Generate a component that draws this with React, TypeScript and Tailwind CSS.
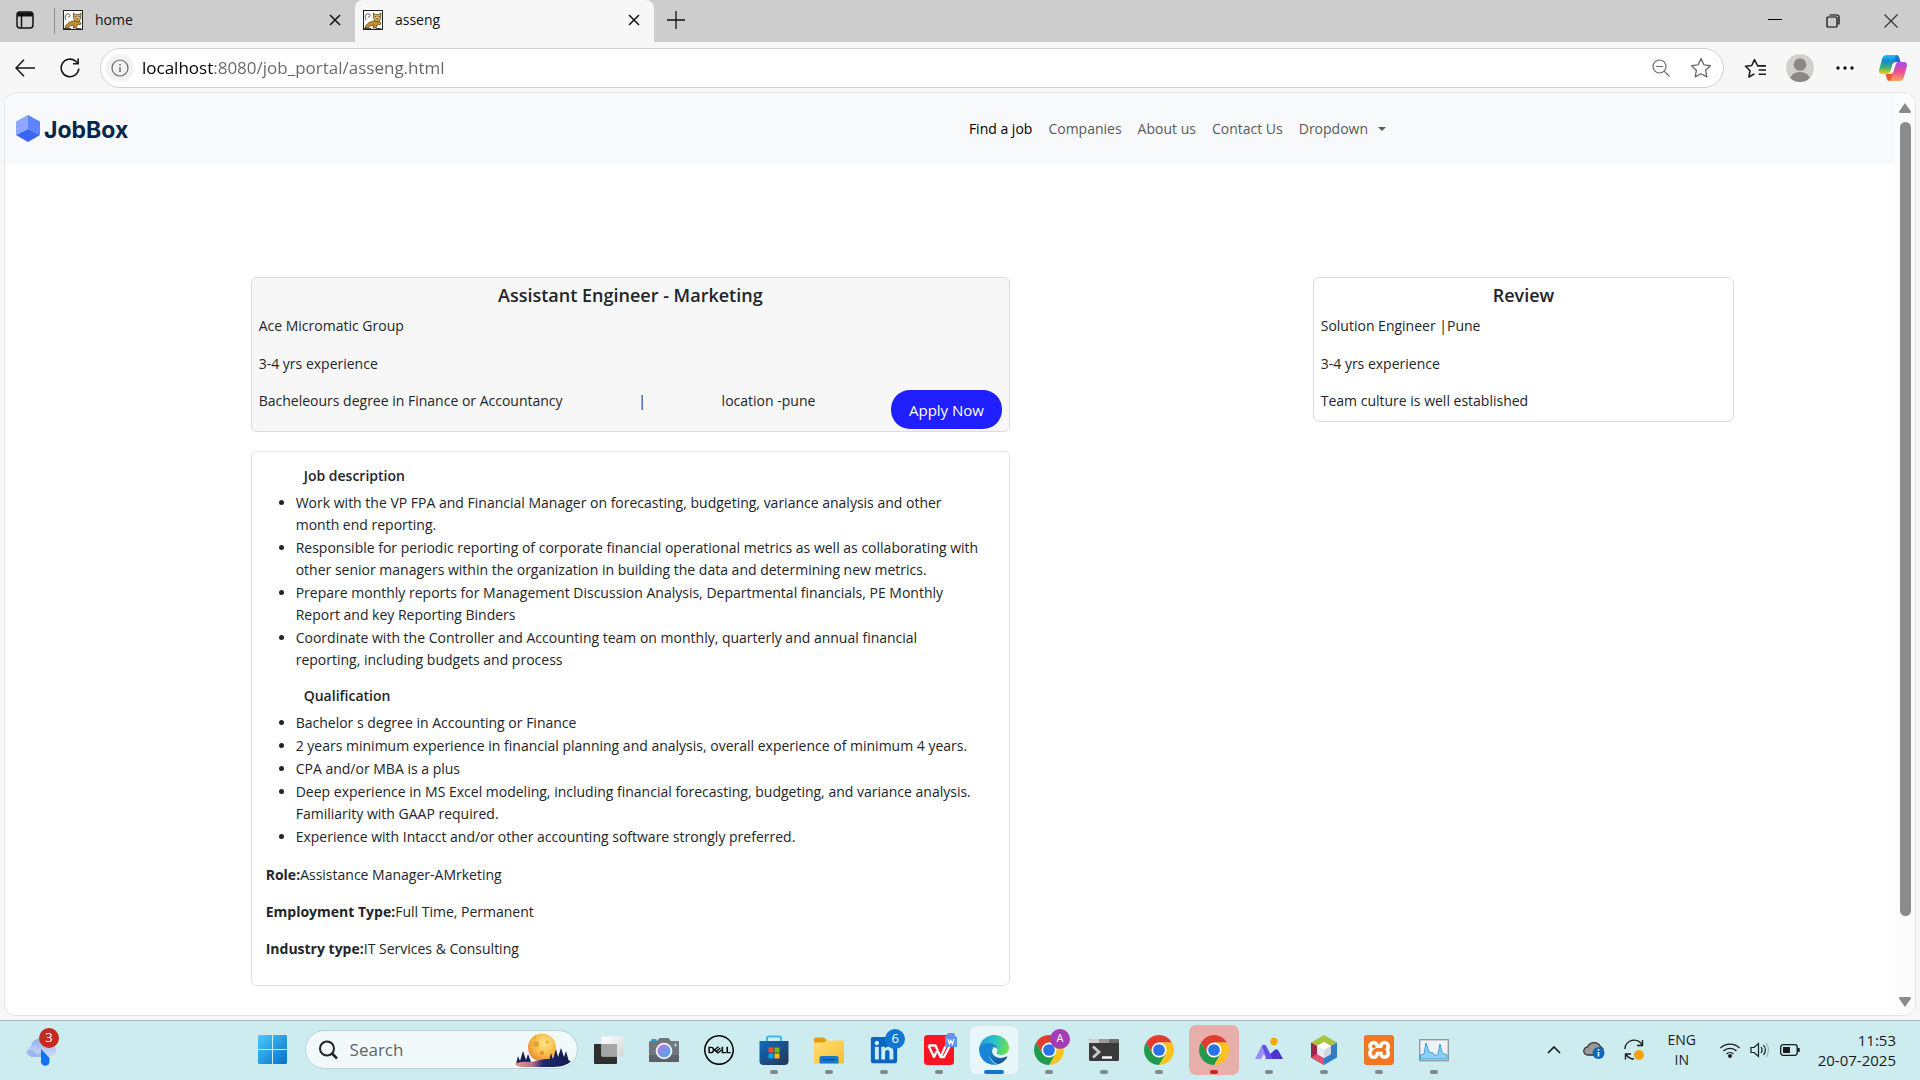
import React from "react";
import { SiDell, SiXampp } from "react-icons/si";
import { FaLinkedin } from "react-icons/fa";

const DUTIES = [
  "Work with the VP FPA and Financial Manager on forecasting, budgeting, variance analysis and other month end reporting.",
  "Responsible for periodic reporting of corporate financial operational metrics as well as collaborating with other senior managers within the organization in building the data and determining new metrics.",
  "Prepare monthly reports for Management Discussion Analysis, Departmental financials, PE Monthly Report and key Reporting Binders",
  "Coordinate with the Controller and Accounting team on monthly, quarterly and annual financial reporting, including budgets and process",
];

const QUALIFICATIONS = [
  "Bachelor s degree in Accounting or Finance",
  "2 years minimum experience in financial planning and analysis, overall experience of minimum 4 years.",
  "CPA and/or MBA is a plus",
  "Deep experience in MS Excel modeling, including financial forecasting, budgeting, and variance analysis. Familiarity with GAAP required.",
  "Experience with Intacct and/or other accounting software strongly preferred.",
];

const DETAILS = [
  ["Role:", "Assistance Manager-AMrketing"],
  ["Employment Type:", "Full Time, Permanent"],
  ["Industry type:", "IT Services & Consulting"],
];

/* ---------- browser chrome ---------- */

function CloseIcon() {
  return (
    <svg viewBox="0 0 12 12" className="size-3" stroke="#111" strokeWidth="1.5" fill="none">
      <path d="M1 1l10 10M11 1L1 11" />
    </svg>
  );
}

function TomcatIcon() {
  return (
    <svg viewBox="0 0 20 20" className="size-5 shrink-0">
      <rect x=".5" y=".5" width="19" height="19" fill="#fff" stroke="#222" />
      <path d="M3 10C1 6 3 3 6 4c2 1 1 3-1 3" fill="none" stroke="#555" strokeWidth="1" />
      <path d="M2 18c1-4 4-6 8-7l5-1 3 3-1 2-2-1-2 4h-3l1-3-4 1-2 2z" fill="#c98d2b" stroke="#3a2a0c" strokeWidth=".6" />
      <path d="M10.5 3l2 1.600h3.200L18 3l-.3 5.500-2 3h-3l-2-3z" fill="#e2b455" stroke="#3a2a0c" strokeWidth=".7" />
      <path d="M12.200 6.500h1M15.500 6.500h1M13.500 9h1.600" stroke="#222" strokeWidth=".9" />
      <path d="M1 18.500h7M13 18.500h5" stroke="#444" strokeWidth="1" />
    </svg>
  );
}

function TabStrip() {
  return (
    <div className="flex h-[42px] bg-[#cdcdcd] pb-0.5">
      <button aria-label="Tab actions" className="flex w-[50px] items-center justify-center">
        <svg viewBox="0 0 18 18" className="size-[18px]" fill="none" stroke="#111" strokeWidth="1.5">
          <rect x="1" y="1" width="16" height="16" rx="3" />
          <path d="M1.500 3.500h15" strokeWidth="4" />
          <path d="M5.500 5v12" />
        </svg>
      </button>
      <div className="mt-2 mb-1.5 ml-1 w-px bg-[#8a8a8a]" />
      <div className="flex w-[300px] items-center pr-3.5 pl-2">
        <div className="flex grow items-center gap-3">
          <TomcatIcon />
          <span className="text-[14px] leading-5 text-[#111]">home</span>
        </div>
        <button aria-label="Close home">
          <CloseIcon />
        </button>
      </div>
      <div className="-mb-0.5 flex w-[299px] items-center rounded-t-lg bg-[#f7f7f7] pr-3.5 pb-0.5 pl-2">
        <div className="flex grow items-center gap-3">
          <TomcatIcon />
          <span className="text-[14px] leading-5 text-[#111]">asseng</span>
        </div>
        <button aria-label="Close asseng">
          <CloseIcon />
        </button>
      </div>
      <button aria-label="New tab" className="flex w-11 items-center justify-center">
        <svg viewBox="0 0 18 18" className="size-[18px]" stroke="#111" strokeWidth="1.300">
          <path d="M9 0v18M0 9h18" />
        </svg>
      </button>
      <div className="ml-auto flex">
        <button aria-label="Minimize" className="flex w-[58px] items-center justify-center">
          <svg viewBox="0 0 14 14" className="size-3.5" stroke="#000"><path d="M0 6.500h14" /></svg>
        </button>
        <button aria-label="Restore" className="flex w-[58px] items-center justify-center pt-0.5">
          <svg viewBox="0 0 14 14" className="size-3.5" stroke="#000" strokeWidth="1.200" fill="none">
            <rect x="1" y="3" width="10" height="10" rx="1" />
            <path d="M3.500 1h7.500a2 2 0 0 1 2 2v7.500" />
          </svg>
        </button>
        <button aria-label="Close window" className="flex w-[58px] items-center justify-center pt-0.5">
          <svg viewBox="0 0 14 14" className="size-3.5" stroke="#333" strokeWidth="1.200"><path d="M.5.5l13 13M13.500.5l-13 13" /></svg>
        </button>
      </div>
    </div>
  );
}

function Copilot() {
  return (
    <svg viewBox="0 0 28 26" className="h-[26px] w-7">
      <defs>
        <linearGradient id="cpA" x1="0" y1="0" x2="0" y2="1">
          <stop offset="0" stopColor="#1ec8f5" /><stop offset=".3" stopColor="#1487d8" /><stop offset=".65" stopColor="#3fae6e" /><stop offset="1" stopColor="#f6d312" />
        </linearGradient>
        <linearGradient id="cpB" x1="0" y1="0" x2="0" y2="1">
          <stop offset="0" stopColor="#a44df0" /><stop offset=".5" stopColor="#ea4d93" /><stop offset="1" stopColor="#ffa45c" />
        </linearGradient>
        <linearGradient id="cpC" x1="0" y1="0" x2="1" y2="1">
          <stop offset="0" stopColor="#1a9bea" /><stop offset="1" stopColor="#2147cf" />
        </linearGradient>
      </defs>
      <path d="M14 0h3.500c1.500 0 2.200 1 2.700 2.500L21.500 7H17c-2 0-2.800 1-3.300 2.700z" fill="url(#cpC)" />
      <path d="M14 26h-3.500c-1.500 0-2.200-1-2.700-2.500L6.500 19H11c2 0 2.800-1 3.300-2.700z" fill="#f2582e" />
      <path d="M7.500 0H18c-1.500.3-2 1.500-2.500 3l-4 13c-.6 2-1.500 3-3.500 3H3c-2.500 0-3.500-2-2.700-4.700l3-11C4.200 1 5.500 0 7.500 0z" fill="url(#cpA)" />
      <path d="M20.500 26H10c1.500-.3 2-1.500 2.500-3l4-13c.6-2 1.500-3 3.500-3h5c2.500 0 3.500 2 2.700 4.700l-3 11C23.800 25 22.500 26 20.500 26z" fill="url(#cpB)" />
      <path d="M13.700 9.500c.5-1.500 1.500-2 3.300-2-1 .8-1.300 1.700-1.600 2.700l-2 6.500c-.5 1.400-1.300 1.800-3 1.800.8-.8 1-1.500 1.300-2.500z" fill="#fff" />
    </svg>
  );
}

const STAR = "M10 1.500l2.600 5.600 6 .8-4.400 4.200 1.100 6L10 15.200l-5.300 2.900 1.100-6L1.400 7.900l6-.8z";

function Toolbar() {
  return (
    <div className="flex h-[50px] items-center bg-[#f7f7f7] pt-0.5">
      <button aria-label="Back" className="flex w-[50px] justify-center">
        <svg viewBox="0 0 20 18" className="h-[18px] w-5" fill="none" stroke="#1a1a1a" strokeWidth="1.600">
          <path d="M9 .8L1 9l8 8.200M1 9h19" />
        </svg>
      </button>
      <button aria-label="Refresh" className="flex w-10 justify-center">
        <svg viewBox="0 0 20 20" className="size-5" fill="none" stroke="#1a1a1a" strokeWidth="1.600">
          <path d="M18.800 10.500a8.800 8.800 0 1 1-3-7.200L18 5.500" />
          <path d="M18.200.5v5.300h-5.300" />
        </svg>
      </button>
      <div className="ml-2.5 flex h-10 grow items-center rounded-full border border-[#cfcfcf] bg-white pr-3 pl-[5px]">
        <button aria-label="View site information" className="flex size-7 items-center justify-center rounded-full bg-[#f2f2f2]">
          <svg viewBox="0 0 18 18" className="size-[18px]" fill="none" stroke="#666" strokeWidth="1.200">
            <circle cx="9" cy="9" r="8" />
            <path d="M9 8v5M9 5v1.500" strokeWidth="1.400" />
          </svg>
        </button>
        <input
          aria-label="Address"
          defaultValue="localhost:8080/job_portal/asseng.html"
          className="ml-2 grow bg-[linear-gradient(90deg,#000_72px,#666_72px)] bg-clip-text text-[17px] leading-6 text-transparent outline-none"
        />
        <button aria-label="Zoom" className="flex w-10 justify-center">
          <svg viewBox="0 0 18 18" className="size-[18px]" fill="none" stroke="#6a6a6a" strokeWidth="1.200">
            <circle cx="7.500" cy="7.500" r="6.500" /><path d="M4 7.500h7M12.200 12.200L17.500 17.500" />
          </svg>
        </button>
        <button aria-label="Add to favorites" className="ml-2.5 flex w-5 justify-center">
          <svg viewBox="0 0 20 20" className="size-[22px] shrink-0" fill="none" stroke="#6a6a6a" strokeWidth="1.200" strokeLinejoin="round"><path d={STAR} /></svg>
        </button>
      </div>
      <button aria-label="Favorites" className="ml-2 flex w-[46px] justify-center">
        <svg viewBox="0 0 22 20" className="h-[21px] w-[23px]" fill="none" stroke="#1a1a1a" strokeWidth="1.500" strokeLinejoin="round">
          <path d="M12.700 6.800L10 1.500 7.400 7.100l-6 .8 4.400 4.200-1.100 6 5.300-2.900M12.500 7.500H21M14 11.500h7M14 15.500h7" />
        </svg>
      </button>
      <button aria-label="Profile" className="ml-2 size-7 overflow-hidden rounded-full bg-[#d2d0ce]">
        <svg viewBox="0 0 28 28" className="size-7" fill="#8a8886"><circle cx="14" cy="10.500" r="6.300" /><ellipse cx="14" cy="26" rx="10" ry="8" /></svg>
      </button>
      <button aria-label="Settings and more" className="flex w-[62px] justify-center">
        <svg viewBox="0 0 18 4" className="h-1 w-[18px]" fill="#111"><circle cx="2" cy="2" r="1.700" /><circle cx="9" cy="2" r="1.700" /><circle cx="16" cy="2" r="1.700" /></svg>
      </button>
      <button aria-label="Copilot" className="mr-[13px] ml-[3px] flex">
        <Copilot />
      </button>
    </div>
  );
}

/* ---------- page ---------- */

function Navbar() {
  return (
    <nav className="flex h-[71px] items-center bg-[#f8f9fa]">
      <a href="#" className="flex w-[51%] items-center gap-1 pl-[11px]">
        <svg viewBox="0 0 24 27" className="h-[27px] w-6">
          <path d="M12 0L0 6.500v13.500L12 14z" fill="#8fa8ff" />
          <path d="M12 0l12 6.500v13.500L12 14z" fill="#5f84ff" />
          <path d="M0 20l12-6 12 6-12 7z" fill="#3c65f5" />
        </svg>
        <span className="pt-0.5 font-[Inter] text-[23px] leading-7 font-bold text-[#05264e]">JobBox</span>
      </a>
      <div className="flex gap-4 text-[14px] leading-[22px] text-[#5a5b5c]">
        <a href="#" className="text-black">Find a job</a>
        <a href="#">Companies</a>
        <a href="#">About us</a>
        <a href="#">Contact Us</a>
        <button className="flex items-center gap-2.5">
          Dropdown
          <svg viewBox="0 0 8 4" className="h-1 w-2" fill="currentColor"><path d="M0 0h8L4 4z" /></svg>
        </button>
      </div>
    </nav>
  );
}

function BulletList({ items }: { items: string[] }) {
  return (
    <ul className="mb-4 list-disc space-y-px pr-3 pl-[30px]">
      {items.map((t) => (
        <li key={t}>{t}</li>
      ))}
    </ul>
  );
}

function JobPage() {
  return (
    <div className="grid grid-cols-[760fr_303fr_422fr] items-start pt-[113px] pr-[8.5%] pl-[13%] text-[14px] leading-[22px] text-[#212529]">
      <div className="flex flex-col gap-[19px]">
        <section className="rounded-md border border-[#dedbdd] bg-[#f7f7f7] px-[7px] pt-1.5 pb-0.5">
          <h1 className="mb-[9px] text-center text-[18px] leading-[22px] font-semibold">Assistant Engineer - Marketing</h1>
          <p className="mb-4">Ace Micromatic Group</p>
          <p className="mb-[15px]">3-4 yrs experience</p>
          <div className="flex items-start justify-between">
            <p>Bacheleours degree in Finance or Accountancy</p>
            <span>|</span>
            <p>location -pune</p>
            <button className="h-[39px] rounded-[19px] bg-[#1f1fff] px-[18px] text-[15px] text-white">Apply Now</button>
          </div>
        </section>
        <section className="rounded-md border border-[#e2e2e4] bg-white px-[14px] pt-[15px] pb-[25px]">
          <h2 className="mb-[7px] pl-[38px] text-[14px] leading-[18px] font-semibold">Job description</h2>
          <BulletList items={DUTIES} />
          <h2 className="mb-[7px] pl-[38px] text-[14px] leading-[18px] font-semibold">Qualification</h2>
          <BulletList items={QUALIFICATIONS} />
          <div className="flex flex-col gap-[15px]">
            {DETAILS.map(([k, v]) => (
              <p key={k}><b>{k}</b>{v}</p>
            ))}
          </div>
        </section>
      </div>
      <section className="col-start-3 rounded-md border border-[#dedbdd] bg-white px-[7px] pt-1.5 pb-[9px]">
        <h2 className="mb-[9px] text-center text-[18px] leading-[22px] font-semibold">Review</h2>
        <p className="mb-4">Solution Engineer |Pune</p>
        <p className="mb-[15px]">3-4 yrs experience</p>
        <p>Team culture is well established</p>
      </section>
    </div>
  );
}

function Scrollbar() {
  return (
    <div className="flex w-5 shrink-0 flex-col items-center bg-[#fcfcfc] pt-2.5 pb-2">
      <svg viewBox="0 0 12 10" className="h-2.5 w-3" fill="#8b8b8b"><path d="M6 0l6 8.500-.5 1.500H.5L0 8.500z" /></svg>
      <div className="mt-[9px] w-[11px] grow rounded-full bg-[#8b8b8b]" />
      <div className="h-[9%]" />
      <svg viewBox="0 0 12 10" className="h-2.5 w-3" fill="#8b8b8b"><path d="M6 10L0 1.500.5 0h11l.5 1.500z" /></svg>
    </div>
  );
}

/* ---------- taskbar icons ---------- */

function Chrome() {
  return (
    <svg viewBox="2 2 44 44" className="size-[30px]">
      <path d="M24 13H43.050A22 22 0 0 0 4.950 13L14.470 29.500 24 24z" fill="#e33b2e" />
      <path d="M43.050 13H24v11l9.530 5.500L24 46A22 22 0 0 0 43.050 13z" fill="#fcc31e" />
      <path d="M24 46l9.530-16.500L24 24l-9.530 5.500L4.950 13A22 22 0 0 0 24 46z" fill="#219a4c" />
      <circle cx="24" cy="24" r="11" fill="#fff" />
      <circle cx="24" cy="24" r="8.600" fill="#2a73e8" />
    </svg>
  );
}

function Edge() {
  return (
    <svg viewBox="0 0 30 30" className="size-[30px]">
      <defs>
        <linearGradient id="edA" x1="0" y1=".3" x2="1" y2=".5">
          <stop offset="0" stopColor="#1f9de0" /><stop offset=".5" stopColor="#2fc3c6" /><stop offset="1" stopColor="#6be14c" />
        </linearGradient>
        <linearGradient id="edB" x1="0" y1="0" x2="1" y2="1">
          <stop offset="0" stopColor="#1b8fdc" /><stop offset="1" stopColor="#114a8b" />
        </linearGradient>
      </defs>
      <path d="M.2 13C1.500 5.500 7.500 0 15 0c8.500 0 15 6 15 12.500 0 4.500-3.500 7.500-7.500 7.500-3 0-5-1-5-2.300 0-1 1-1.200 1-3C18.500 11.500 15 9 10.500 9 5.500 9 2 11.500.2 13z" fill="url(#edA)" />
      <path d="M.2 13C2 9.500 6 8 10 8c5 0 8.500 3 8.500 6.500-1-2-3-2.500-4.500-2-3 1-4.500 4.500-3.500 8.500 1 4.500 4.500 8 8.500 8.300A15 15 0 0 1 .2 13z" fill="#1785d8" />
      <path d="M10.500 14.500C8.500 19 11 26 19 29.300c4-1 7.500-3.800 9.300-7.200.3-.6-.2-.9-.7-.6-5 2.500-11 1.500-13.500-2-1.300-2-1.500-4.500.5-7-1.800 0-3.300.7-4.100 2z" fill="url(#edB)" />
    </svg>
  );
}

function TaskView() {
  return (
    <svg viewBox="0 0 30 30" className="size-[30px]">
      <defs><linearGradient id="tvA" x1="0" y1="0" x2="1" y2="1"><stop offset="0" stopColor="#fff" /><stop offset="1" stopColor="#d5d5d5" /></linearGradient></defs>
      <rect x="0" y="9" width="23" height="20" rx="1" fill="#2f2f2d" />
      <rect x="7.500" y="1.500" width="22" height="20" rx="1" fill="url(#tvA)" />
      <path d="M7.500 9H23v12.500H8.500a1 1 0 0 1-1-1z" fill="#a3a6a5" />
    </svg>
  );
}

function Camera() {
  return (
    <svg viewBox="0 0 30 30" className="size-[30px]">
      <defs><linearGradient id="cmA" x1="0" y1="0" x2="1" y2="1"><stop offset="0" stopColor="#c36ee0" /><stop offset="1" stopColor="#36b4f2" /></linearGradient></defs>
      <rect x="2" y="4" width="6" height="4" rx="1.500" fill="#1aa4e4" />
      <path d="M1.500 6H8l2.500-3h9L22 6h6.500c1 0 1.500.5 1.500 1.500v18c0 1-.5 1.500-1.500 1.500h-27C.5 27 0 26.500 0 25.500v-18C0 6.500.5 6 1.500 6z" fill="#70767d" />
      <path d="M0 20h30v5.500c0 1-.5 1.500-1.500 1.500h-27C.5 27 0 26.500 0 25.500z" fill="#5c6269" />
      <circle cx="15" cy="16" r="8.300" fill="#f4f4f4" /><circle cx="15" cy="16" r="6.500" fill="url(#cmA)" />
      <path d="M26.500 8.500v3M25 10h3" stroke="#ddd" strokeWidth=".9" />
    </svg>
  );
}

function Store() {
  return (
    <svg viewBox="0 0 30 30" className="size-[30px]">
      <defs><linearGradient id="stA" x1="0" y1="0" x2="1" y2="1"><stop offset="0" stopColor="#0f6cc0" /><stop offset="1" stopColor="#263356" /></linearGradient></defs>
      <path d="M8 8V3a1.500 1.500 0 0 1 1.500-1.500h11A1.500 1.500 0 0 1 22 3v5" fill="none" stroke="#34bdf0" strokeWidth="2" />
      <path d="M.5 6h29v20a4 4 0 0 1-4 4h-21a4 4 0 0 1-4-4z" fill="url(#stA)" />
      <path d="M9.500 12.500h5v5h-5z" fill="#f25022" /><path d="M15.500 12.500h5v5h-5z" fill="#7fba00" />
      <path d="M9.500 18.500h5v5h-5z" fill="#00a4ef" /><path d="M15.500 18.500h5v5h-5z" fill="#ffb900" />
    </svg>
  );
}

function Folder() {
  return (
    <svg viewBox="0 0 30 30" className="size-[30px]">
      <defs><linearGradient id="foA" x1="0" y1="0" x2="1" y2="1"><stop offset="0" stopColor="#ffe07a" /><stop offset="1" stopColor="#f9bd2c" /></linearGradient></defs>
      <path d="M0 4a1.500 1.500 0 0 1 1.500-1.500H10L13 6v4H0z" fill="#e09d0c" />
      <path d="M0 7.500h10L13 5.500h16a1 1 0 0 1 1 1v21a1 1 0 0 1-1 1H1a1 1 0 0 1-1-1z" fill="url(#foA)" />
      <path d="M5.500 28.500V23a2 2 0 0 1 2-2h15a2 2 0 0 1 2 2v5.500z" fill="#1479c9" />
      <path d="M9 24.700h12" stroke="#0b4f8f" strokeWidth="1.300" />
    </svg>
  );
}

function Wps() {
  return (
    <svg viewBox="0 0 30 30" className="size-[30px]">
      <rect width="30" height="30" rx="3.500" fill="#fb1524" />
      <path d="M4.500 10.500l5.500 11.500 4-8M4.500 10.500h7l5 11.500 4-8.500 1.500-3h4L20 22h-3.500" fill="none" stroke="#fff" strokeWidth="2.300" strokeLinejoin="round" />
    </svg>
  );
}

function Terminal() {
  return (
    <svg viewBox="0 0 30 30" className="size-[30px]">
      <rect x="0" y="4" width="30" height="22" rx="1.500" fill="#3a3a3a" />
      <path d="M1.500 4H10v4H0V5.500A1.500 1.500 0 0 1 1.500 4z" fill="#cfcfcf" /><path d="M10 4h10v4H10z" fill="#9a9a9a" /><path d="M20 4h8.500A1.500 1.500 0 0 1 30 5.500V8H20z" fill="#6d6d6d" />
      <path d="M4 11.500l6 5.500-6 5.500" fill="none" stroke="#c9c9c9" strokeWidth="2.800" />
      <path d="M13 22.500h10" stroke="#fff" strokeWidth="2.400" />
    </svg>
  );
}

function Peaks() {
  return (
    <svg viewBox="0 0 30 30" className="size-[30px]">
      <path d="M1 24L7.500 11c1-2 3.500-2 4.500 0l6.500 13h-6L9.500 19 7 24z" fill="#9b8bf7" />
      <path d="M11 24l9.500-9c1.500-1.400 3-1 4 .7L29 24z" fill="#4a35cf" />
      <path d="M8 11c1.300-1.500 3.500-1.300 4.500.7L19 24h-6z" fill="#6550e6" />
      <circle cx="20" cy="6.500" r="3.700" fill="#fba60a" />
    </svg>
  );
}

function NetBeans() {
  return (
    <svg viewBox="0 0 30 30" className="size-[30px]">
      <path d="M15 0l13 7.500-6 3.500-7-4-7 4-6-3.500z" fill="#a9c23f" />
      <path d="M2 7.500L8 11v8l7 4v7L2 22.500z" fill="#a0264c" />
      <path d="M28 7.500V22.500L15 30v-7l7-4v-8z" fill="#2f7cc9" />
      <path d="M2 22.500L8 19l7 4v7z" fill="#e0526f" />
      <path d="M15 7l7 4-7 4-7-4z" fill="#fff" /><path d="M8 11l7 4v8l-7-4z" fill="#e6ebef" /><path d="M22 11v8l-7 4v-8z" fill="#cfd8e0" />
    </svg>
  );
}

function Monitor() {
  return (
    <svg viewBox="0 0 30 30" className="size-[30px]">
      <rect x=".7" y="4.700" width="28.600" height="21" fill="#eef2f6" stroke="#8d959c" strokeWidth="1.300" />
      <path d="M1.500 20L5 19l2-11 3 9 4 1 2 3 3-2 2-10 2 9 5 2v4H1.500z" fill="#8fd0f5" stroke="#3aa0dc" strokeWidth="1" />
    </svg>
  );
}

function Moon() {
  return (
    <svg viewBox="0 0 56 34" className="h-[34px] w-14">
      <defs>
        <radialGradient id="moA" cx=".6" cy=".35" r=".7"><stop offset="0" stopColor="#ffe58a" /><stop offset=".6" stopColor="#f7b944" /><stop offset="1" stopColor="#e8843f" /></radialGradient>
        <linearGradient id="moB" x1="0" y1="0" x2="1" y2="0"><stop offset="0" stopColor="#e79a8a" /><stop offset=".3" stopColor="#b9748b" /><stop offset=".5" stopColor="#1d2a72" /><stop offset="1" stopColor="#111a52" /></linearGradient>
      </defs>
      <circle cx="27" cy="14.500" r="14" fill="url(#moA)" />
      <circle cx="21" cy="11" r="3" fill="#e5a235" /><circle cx="32" cy="9" r="1.800" fill="#efb13c" /><circle cx="27" cy="20" r="2" fill="#e58a3c" /><circle cx="20" cy="4.500" r="1.200" fill="#e5a235" />
      <path d="M1 31L3 23l2 5 3-10 3 9 2-6 3 8v3zM34 29l2-9 2 6 3-10 2 8 3-9 3 9 2-6 3 11-10 3z" fill="#141c55" />
      <path d="M0 31c6-4 14-1 21-3 10-3 24-3 35 0-4 5-12 6-20 6H8c-4 0-7-1-8-3z" fill="url(#moB)" />
    </svg>
  );
}

type TaskApp = { name: string; icon: React.ReactNode; badge?: React.ReactNode; tone?: string; bar?: string };

const DOT = "w-2 bg-[#7c8a8c]";
const APPS: TaskApp[] = [
  { name: "Task view", icon: <TaskView /> },
  { name: "Camera", icon: <Camera /> },
  { name: "Dell", icon: <SiDell className="size-[30px] text-black" /> },
  { name: "Microsoft Store", icon: <Store />, bar: DOT },
  { name: "File Explorer", icon: <Folder />, bar: DOT },
  {
    name: "LinkedIn",
    icon: <FaLinkedin className="size-[30px] text-[#0a66c2]" />,
    bar: DOT,
    badge: <span className="absolute top-[3px] right-[3px] flex size-5 items-center justify-center rounded-full bg-[#0f76d3] text-[13px] text-white">6</span>,
  },
  {
    name: "WPS Office",
    icon: <Wps />,
    bar: DOT,
    badge: (
      <svg viewBox="0 0 12 14" className="absolute top-[7px] right-1.5 h-3.5 w-3">
        <path d="M2 3a4 4 0 0 1 8 0l2 1v10H0V3z" fill="#5d95f0" /><path d="M3 6l1.500 5L6 7.500 7.500 11 9 6" fill="none" stroke="#fff" strokeWidth="1.200" />
      </svg>
    ),
  },
  { name: "Microsoft Edge", icon: <Edge />, tone: "bg-[#e8f5f9] ring-1 ring-[#d5e8ec]", bar: "w-5 bg-[#0f76d3]" },
  {
    name: "Chrome, profile A",
    icon: <Chrome />,
    bar: DOT,
    badge: <span className="absolute top-[3px] right-[3px] flex size-5 items-center justify-center rounded-full bg-[#a53cb4] text-[11px] text-white">A</span>,
  },
  { name: "Terminal", icon: <Terminal />, bar: DOT },
  { name: "Chrome", icon: <Chrome />, bar: DOT },
  { name: "Chrome alert", icon: <Chrome />, tone: "bg-[#e8aeaa] ring-1 ring-[#e8aeaa]", bar: "w-2 bg-[#c42b1c]" },
  { name: "Peaks", icon: <Peaks />, bar: DOT },
  { name: "NetBeans", icon: <NetBeans />, bar: DOT },
  {
    name: "XAMPP",
    icon: (
      <span className="flex size-[30px] items-center justify-center rounded bg-white ring-1 ring-[#b95a1b] ring-inset">
        <SiXampp className="size-[30px] text-[#f37623]" />
      </span>
    ),
    bar: DOT,
  },
  { name: "Resource Monitor", icon: <Monitor />, bar: DOT },
];

function Taskbar() {
  return (
    <footer className="flex h-[60px] items-center border-t border-[#a9b9be] bg-[#cdecf0] pb-0.5 text-[#1a1a1a]">
      <div className="w-[13%] pl-[25px]">
        <button aria-label="Weather" className="relative flex">
          <svg viewBox="0 0 32 32" className="size-8">
            <defs><linearGradient id="clA" x1="0" y1="0" x2="0" y2="1"><stop offset="0" stopColor="#8fb0f0" /><stop offset="1" stopColor="#d3def8" /></linearGradient></defs>
            <path d="M7 23a6 6 0 0 1-1-11A9 9 0 0 1 22 8a7.500 7.500 0 0 1 3 15z" fill="url(#clA)" />
            <path d="M1.500 17c3-2 6-1 8 1s5 2 7 0v5H7a6 6 0 0 1-5.500-6z" fill="#9db8ee" />
            <path d="M16 15l8.500 9V27.500a4 4 0 0 1-8.500 0z" fill="#1273f2" />
          </svg>
          <span className="absolute -top-1.5 left-[14px] flex size-5 items-center justify-center rounded-full bg-[#c42b1c] text-[13px] text-white">3</span>
        </button>
      </div>
      <button aria-label="Start" className="flex w-[46px] justify-center">
        <svg viewBox="0 0 29 29" className="size-[29px]">
          <defs><linearGradient id="wnA" x1="0" y1="0" x2="1" y2="1"><stop offset="0" stopColor="#4cc8f8" /><stop offset="1" stopColor="#0670cc" /></linearGradient></defs>
          <path d="M1 0h13v14H0V1zM15 0h13l1 1v13H15zM0 15h14v14H1l-1-1zM15 15h14v13l-1 1H15z" fill="url(#wnA)" />
        </svg>
      </button>
      <label className="ml-[9px] flex h-[39px] w-[273px] items-center rounded-full border border-[#b7d3d8] bg-[#f1f9fb] pr-1.5 pl-3">
        <svg viewBox="0 0 20 20" className="size-5 shrink-0" fill="none" stroke="#222" strokeWidth="2"><circle cx="9" cy="8.500" r="7" /><path d="M14 13.500l5 5" strokeWidth="2.500" /></svg>
        <input aria-label="Search" placeholder="Search" className="ml-3 w-0 grow bg-transparent text-[17px] leading-6 outline-none placeholder:text-[#5f6668]" />
        <Moon />
      </label>
      <div className="ml-1 flex">
        {APPS.map((a) => (
          <button key={a.name} aria-label={a.name} className="flex w-[55px] justify-center">
            <span className={`relative flex size-12 items-center justify-center rounded-md ${a.tone ?? ""}`}>
              {a.icon}
              {a.badge}
              {a.bar && <span className={`absolute bottom-0 left-1/2 h-1 -translate-x-1/2 rounded-full ${a.bar}`} />}
            </span>
          </button>
        ))}
      </div>
      <div className="ml-auto flex items-center pr-6">
        <button aria-label="Show hidden icons" className="flex w-10 justify-center">
          <svg viewBox="0 0 14 8" className="h-2 w-3.5" fill="none" stroke="#1a1a1a" strokeWidth="1.700"><path d="M1 7l6-6 6 6" /></svg>
        </button>
        <button aria-label="OneDrive" className="flex w-10 justify-center">
          <svg viewBox="0 0 22 18" className="h-[18px] w-[22px]">
            <path d="M5 14a4 4 0 0 1-.5-8A7 7 0 0 1 17 5l3 3-8 6z" fill="#9b9b9b" stroke="#333" strokeWidth="1.300" />
            <circle cx="15.500" cy="12" r="6" fill="#0f66bb" /><path d="M15.500 11v4.500M15.500 8v1.700" stroke="#fff" strokeWidth="1.600" />
          </svg>
        </button>
        <button aria-label="Sync" className="flex w-10 justify-center">
          <svg viewBox="0 0 20 22" className="h-[22px] w-5" fill="none" stroke="#1a1a1a" strokeWidth="1.400">
            <path d="M1 10A9 9 0 0 1 18 6M18.500 1v5.500h-5.500M10 20c-3 0-6-1.500-8-4.500M1.500 20.500V15H7" />
            <circle cx="15" cy="16" r="5" fill="#f9a00f" stroke="none" />
          </svg>
        </button>
        <button className="w-14 text-center text-[14px] leading-5">ENG<br />IN</button>
        <button aria-label="Network, volume and battery" className="ml-2.5 flex items-center gap-2.5">
          <svg viewBox="0 0 20 16" className="h-4 w-5" fill="none" stroke="#1a1a1a" strokeWidth="1.300">
            <path d="M.5 6a13.500 13.500 0 0 1 19 0M3.500 9a9.300 9.300 0 0 1 13 0M6.500 12a5 5 0 0 1 7 0" /><circle cx="10" cy="14" r="1.300" fill="#1a1a1a" />
          </svg>
          <svg viewBox="0 0 20 16" className="h-4 w-5" fill="none" stroke="#1a1a1a" strokeWidth="1.200">
            <path d="M1 5.500h3L8.500 1.500v13L4 10.500H1zM11 5c1.300 1.800 1.300 4.200 0 6M13.500 3c2.300 3 2.300 7 0 10" /><path d="M16 1c3.300 4 3.300 10 0 14" stroke="#9fb5b8" />
          </svg>
          <svg viewBox="0 0 20 12" className="h-3 w-5" fill="none" stroke="#1a1a1a" strokeWidth="1.300">
            <rect x=".7" y=".7" width="16.500" height="10.600" rx="2.500" /><rect x="3" y="3" width="7" height="6" fill="#1a1a1a" stroke="none" /><path d="M18.700 4v4" strokeWidth="2" />
          </svg>
        </button>
        <button className="ml-[18px] text-right text-[15px] leading-5">11:53<br />20-07-2025</button>
      </div>
    </footer>
  );
}

export default function App() {
  return (
    <div className="flex min-h-screen flex-col bg-[#f7f7f7] font-['Open_Sans','Noto_Sans',sans-serif]">
      <TabStrip />
      <Toolbar />
      <div className="mx-1 mb-1 flex grow overflow-hidden rounded-xl border border-[#e4e4e6] bg-white">
        <main className="min-w-0 flex-1">
          <Navbar />
          <JobPage />
        </main>
        <Scrollbar />
      </div>
      <Taskbar />
    </div>
  );
}
